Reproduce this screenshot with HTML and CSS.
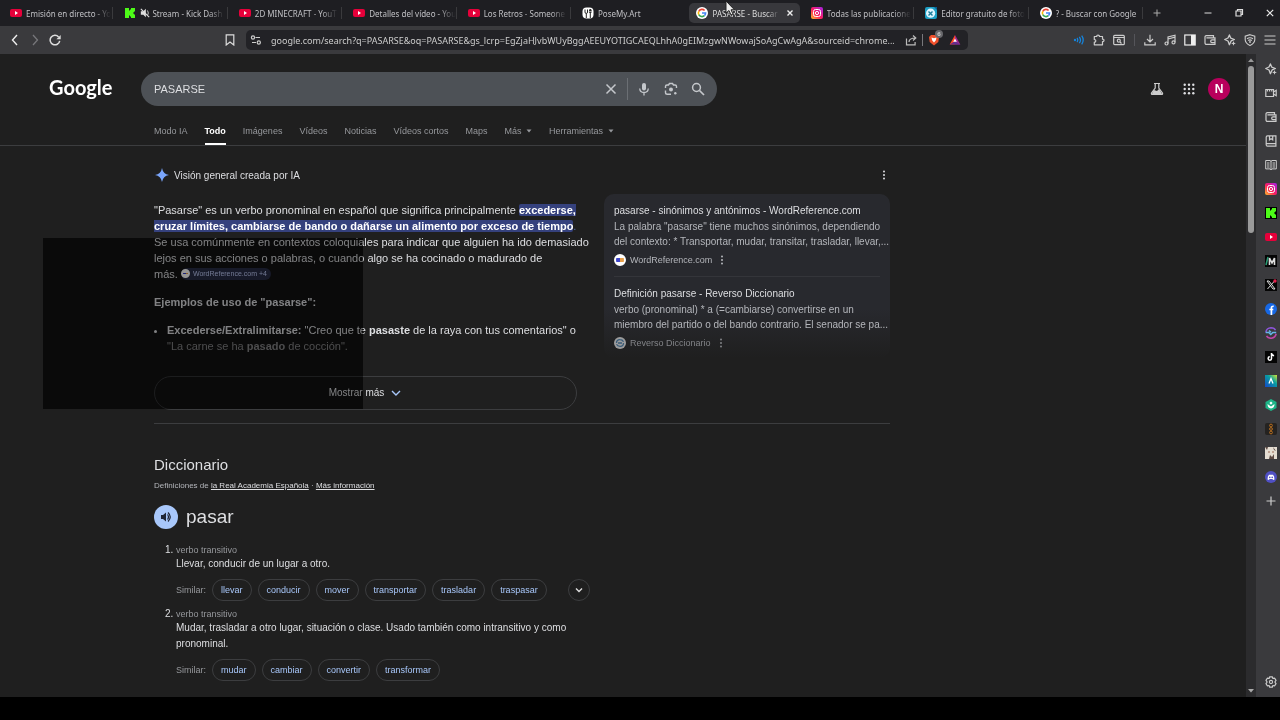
FILE: index.html
```html
<!DOCTYPE html>
<html lang="es">
<head>
  <meta charset="UTF-8">
  <title>PASARSE - Buscar con Google</title>
  <link rel="stylesheet" href="styles.css">
</head>
<body>
  <svg class="sprite" aria-hidden="true">
    <symbol id="youtube" viewBox="0 0 12 12"><rect y="2" width="12" height="8" rx="2" fill="#e6003a"/><path d="M5 4l3 2-3 2z" fill="#fff"/></symbol>
    <symbol id="kick" viewBox="0 0 12 12"><path d="M1 1h4v2.500h1V2.500h1V1h4v3.500h-1v1H9v1h1v1h1V11H7V9.500H6v-1H5V11H1z" fill="#4dfa18"/></symbol>
    <symbol id="google" viewBox="0 0 12 12"><circle cx="6" cy="6" r="6" fill="#fff"/><g fill="none" stroke-width="1.600"><path d="M8.600 3.500A3.600 3.600 0 0 0 2.800 4.300" stroke="#ea4335"/><path d="M2.800 4.300a3.600 3.600 0 0 0 0 3.400" stroke="#fbbc05"/><path d="M2.800 7.700a3.600 3.600 0 0 0 5.600 1" stroke="#34a853"/><path d="M8.400 8.700A3.600 3.600 0 0 0 9.600 6H6" stroke="#4285f4"/></g></symbol>
    <symbol id="instagram" viewBox="0 0 12 12"><rect width="12" height="12" rx="2" fill="url(#insta)"/><g fill="none" stroke="#fff"><rect x="2.500" y="2.500" width="7" height="7" rx="2"/><circle cx="6" cy="6" r="1.600"/></g></symbol>
    <symbol id="dots" viewBox="0 0 12 12"><circle cx="6" cy="2.500" r="1"/><circle cx="6" cy="6" r="1"/><circle cx="6" cy="9.500" r="1"/></symbol>
    <symbol id="wallet" viewBox="0 0 12 12"><g fill="none" stroke="currentColor" stroke-width="1.200"><path d="M9.500 3.500V1.600H2.400A1.400 1.400 0 0 0 1 3v6a1.400 1.400 0 0 0 1.400 1.400H11V3.800H2.400"/><path d="M11 5.900H8a1.300 1.300 0 0 0 0 2.700h3"/></g></symbol>
    <symbol id="leo" viewBox="0 0 12 12"><path d="M5.400.9l1.300 3.200 3.700 1.400-3.200 1.400-1.800 3.800L4 7 .7 5.500 4 4z" fill="none" stroke="currentColor" stroke-width="1.300" stroke-linejoin="round"/><path d="M9.500 7l.7 1.700 1.700.7-1.700.7-.7 1.700-.7-1.700-1.700-.7 1.700-.7z" fill="currentColor"/></symbol>
    <symbol id="arrow" viewBox="0 0 6 4"><path d="M.5.5h5L3 3.500z" fill="currentColor"/></symbol>
    <linearGradient id="insta" x1="0" y1="1" x2="1" y2="0"><stop stop-color="#ffc229"/><stop offset=".45" stop-color="#fb1d5e"/><stop offset="1" stop-color="#a321ed"/></linearGradient>
  </svg>

  <div class="browser">
    <header class="tabs">
      <nav class="tab-list">
        <a class="tab" href="#"><svg><use href="#youtube"/></svg><span>Emisión en directo - Yo</span></a>
        <a class="tab" href="#"><svg><use href="#kick"/></svg><svg class="muted" viewBox="0 0 12 12"><path d="M1 4h3l3-3v10L4 8H1z" fill="#ddd"/><path d="M1 1l10 10" stroke="#ddd" stroke-width="1.300"/><path d="M9 3q2 3 0 6" fill="none" stroke="#ddd"/></svg><span>Stream - Kick Dash</span></a>
        <a class="tab" href="#"><svg><use href="#youtube"/></svg><span>2D MINECRAFT - YouT</span></a>
        <a class="tab" href="#"><svg><use href="#youtube"/></svg><span>Detalles del vídeo - You</span></a>
        <a class="tab" href="#"><svg><use href="#youtube"/></svg><span>Los Retros - Someone</span></a>
        <a class="tab before" href="#"><svg viewBox="0 0 12 12"><rect x=".5" y=".5" width="11" height="11" rx="4" fill="#fff"/><path d="M3 2.500v2.500q0 1.500 1.300 1.500V11M5.500 2.500V5q0 1.500-1.200 1.500M8.300 5v6M6.900 5q1.400 1 2.800 0" stroke="#222" fill="none"/><circle cx="8.300" cy="3.200" r="1.200" fill="#222"/></svg><span>PoseMy.Art</span></a>
        <a class="tab active" href="#"><svg><use href="#google"/></svg><span>PASARSE - Buscar</span><svg class="close" viewBox="0 0 12 12"><path d="M3.500 3.500l5 5M8.500 3.500l-5 5" stroke="#eee" stroke-width="1.400"/></svg></a>
        <a class="tab" href="#"><svg><use href="#instagram"/></svg><span>Todas las publicacione</span></a>
        <a class="tab" href="#"><svg viewBox="0 0 12 12"><rect width="12" height="12" rx="2" fill="#1d9fc4"/><circle cx="5.600" cy="6.200" r="4.600" fill="#dff6ff"/><path d="M3.500 4.500l4 4M7.500 4.500l-4 4" stroke="#1a7f9c" stroke-width="1.400"/><path d="M9 0h3v3z" fill="#0a5d92"/></svg><span>Editor gratuito de foto</span></a>
        <a class="tab" href="#"><svg><use href="#google"/></svg><span>? - Buscar con Google</span></a>
      </nav>
      <button class="new-tab" aria-label="Nueva pestaña"><svg viewBox="0 0 12 12"><path d="M6 2.500v7M2.500 6h7" stroke="#aaa"/></svg></button>
      <div class="window-buttons">
        <button aria-label="Minimizar"><svg viewBox="0 0 12 12"><path d="M2.500 6h7" stroke="#ddd"/></svg></button>
        <button aria-label="Restaurar"><svg viewBox="0 0 12 12"><path d="M3 4h5v5H3zM4.500 4V2.500H9.500v5H8" fill="none" stroke="#ddd" stroke-width="1.200"/></svg></button>
        <button aria-label="Cerrar"><svg viewBox="0 0 12 12"><path d="M2.800 2.800l6.400 6.400M9.200 2.800L2.800 9.200" stroke="#eee" stroke-width="1.200"/></svg></button>
      </div>
    </header>

    <div class="toolbar">
      <div class="history">
        <button aria-label="Atrás"><svg viewBox="0 0 12 12"><path d="M8 1L3.500 6 8 11" fill="none" stroke="#eee" stroke-width="1.400"/></svg></button>
        <button aria-label="Adelante"><svg viewBox="0 0 12 12"><path d="M4 1l4.500 5L4 11" fill="none" stroke="#77777b" stroke-width="1.300"/></svg></button>
        <button aria-label="Recargar"><svg viewBox="0 0 12 12"><path d="M10.700 6.800A4.800 4.800 0 1 1 9.600 2.900" fill="none" stroke="#ddd" stroke-width="1.500"/><path d="M11.700 1v4.300H7.400z" fill="#ddd"/></svg></button>
        <button class="bookmark" aria-label="Marcador"><svg viewBox="0 0 12 12"><path d="M2.200.8h7.600v10.200L6 8l-3.800 3z" fill="none" stroke="#ddd" stroke-width="1.200"/></svg></button>
      </div>
      <div class="address">
        <svg viewBox="0 0 12 12"><g fill="none" stroke="#ccc" stroke-width="1.200"><circle cx="3" cy="3.500" r="1.600"/><path d="M5.500 3.500H10M2 8.500h4"/><circle cx="8.800" cy="8.500" r="1.600"/></g></svg>
        <input type="text" aria-label="Dirección" value="google.com/search?q=PASARSE&amp;oq=PASARSE&amp;gs_lcrp=EgZjaHJvbWUyBggAEEUYOTIGCAEQLhhA0gEIMzgwNWowajSoAgCwAgA&amp;sourceid=chrome...">
        <button aria-label="Compartir"><svg viewBox="0 0 12 12"><path d="M1.500 4.500v6.300h8.600V8M4 8q0-4 6.500-4M8 1.500L10.800 4 8 6.500" fill="none" stroke="#bbb" stroke-width="1.200"/></svg></button>
        <i class="line"></i>
        <button class="shield" aria-label="Escudos"><svg viewBox="0 0 12 12"><path d="M3 1h6l2 2-.7 5L6 11.500 1.700 8 1 3z" fill="#f0502c"/><path d="M3.500 3.500l2.500.8 2.500-.8-.6 2.700L6 8.500 4.100 6.200z" fill="#fff"/></svg><b>6</b></button>
        <button aria-label="BAT"><svg viewBox="0 0 12 12"><path d="M6 1L.7 10.500H6z" fill="#ff4724"/><path d="M6 1l5.300 9.500H6z" fill="#a0278e"/><path d="M.7 10.500h10.600L6 7z" fill="#662d91"/><path d="M6 4.500l1.800 3.300H4.200z" fill="#fff"/></svg></button>
      </div>
      <div class="extensions">
        <button aria-label="Audio"><svg viewBox="0 0 12 12"><g fill="none" stroke="#1684dc" stroke-width="1.300"><path d="M4 4q1.500 2 0 4M6.300 2.800q2.400 3.200 0 6.400M8.700 1.700q3 4.300 0 8.600"/></g><circle cx="2" cy="6" r="1.200" fill="#1684dc"/></svg></button>
        <button aria-label="Extensiones"><svg viewBox="0 0 12 12"><path d="M1.300 2.500h2.500C3.300.6 6.700.6 6.400 2.500H9.500v2.700c2-.5 2 2.700 0 2.300v3.300H1.300V8.200c2 .3 2-3 0-2.600z" fill="none" stroke="#ccc" stroke-width="1.200" stroke-linejoin="round"/></svg></button>
        <button aria-label="Buscar en la página"><svg viewBox="0 0 12 12"><g fill="none" stroke="#ccc" stroke-width="1.200"><rect x=".7" y="1.300" width="10.600" height="9.400" rx="1"/><path d="M.7 3.500h10.600M7 8l1.500 1.500"/><circle cx="5.800" cy="6.700" r="1.500"/></g></svg></button>
        <i class="line"></i>
        <button aria-label="Descargas"><svg viewBox="0 0 12 12"><path d="M6 .8v7M3 5l3 3 3-3M.8 8.200v2.600h10.400V8.200" fill="none" stroke="#ccc" stroke-width="1.200"/></svg></button>
        <button aria-label="Música"><svg viewBox="0 0 12 12"><g fill="none" stroke="#ccc" stroke-width="1.200"><path d="M4 9.500V3l7-1.800v7M4 5l7-1.800"/><circle cx="2.500" cy="9.500" r="1.500"/><circle cx="9.500" cy="8.400" r="1.500"/></g></svg></button>
        <button aria-label="Panel lateral"><svg viewBox="0 0 12 12"><rect x=".8" y="1" width="10.400" height="10" fill="none" stroke="#eee" stroke-width="1.200"/><path d="M7 1h4v10H7z" fill="#eee"/></svg></button>
        <button aria-label="Cartera"><svg><use href="#wallet"/></svg></button>
        <button aria-label="Leo"><svg><use href="#leo"/></svg></button>
        <button aria-label="VPN"><svg viewBox="0 0 12 12"><g fill="none" stroke="#ccc" stroke-width="1.100"><path d="M6 .7l4.800 1.500v3.600Q10.500 9.500 6 11.400 1.500 9.500 1.200 5.800V2.200z"/><path d="M3 4.800q3-2.200 6 0M4.200 6.500q1.800-1.300 3.600 0"/></g><circle cx="6" cy="8" r=".9" fill="#ccc"/></svg></button>
        <button aria-label="Menú"><svg viewBox="0 0 12 12"><path d="M.5 2h11M.5 6h11M.5 10h11" stroke="#ccc" stroke-width="1.200"/></svg></button>
      </div>
    </div>

    <div class="window">
      <div class="page">
        <div class="search-header">
          <a class="logo" href="#">Google</a>
          <form class="search-box">
            <input type="text" aria-label="Buscar" value="PASARSE">
            <button type="button" aria-label="Borrar"><svg viewBox="0 0 14 14"><path d="M2.500 2.500l9 9M11.500 2.500l-9 9" stroke="#c4c7cb" stroke-width="1.500"/></svg></button>
            <i class="line"></i>
            <button type="button" aria-label="Buscar por voz"><svg viewBox="0 0 14 14"><rect x="5" y="1" width="4" height="7.500" rx="2" fill="#c4c7cb"/><path d="M2.700 6.500q.3 4 4.300 4t4.300-4M7 10.500v3" fill="none" stroke="#c4c7cb" stroke-width="1.300"/></svg></button>
            <button type="button" aria-label="Buscar por imagen"><svg viewBox="0 0 14 14"><path d="M1.500 6V4.500q0-1.500 1.500-1.500h1.500L5.500 1.500h3L9.500 3H11q1.500 0 1.500 1.500V6M1.500 8.500v2q0 1.800 1.800 1.800H7" fill="none" stroke="#c4c7cb" stroke-width="1.400"/><circle cx="7" cy="7.400" r="2" fill="#c4c7cb"/><circle cx="11.300" cy="11.300" r="1.200" fill="#c4c7cb"/></svg></button>
            <button type="button" aria-label="Buscar"><svg viewBox="0 0 14 14"><circle cx="5.500" cy="5.500" r="3.900" fill="none" stroke="#c4c7cb" stroke-width="1.500"/><path d="M8.500 8.500l4.500 4.500" stroke="#c4c7cb" stroke-width="1.700"/></svg></button>
          </form>
          <div class="account">
            <button aria-label="Labs"><svg viewBox="0 0 14 14"><path d="M4 1.500h6M5.200 2v4L1.500 11q-.5 1.500 1 1.500h9q1.500 0 1-1.500L8.800 6V2" fill="none" stroke="#ccc" stroke-width="1.200"/><path d="M4 8l3 1 2-2 3 4.500-1 1H2.500L2 11z" fill="#ccc"/></svg></button>
            <button aria-label="Aplicaciones"><svg viewBox="0 0 14 14" fill="#ccc"><circle cx="2.700" cy="2.700" r="1.200"/><circle cx="7" cy="2.700" r="1.200"/><circle cx="11.300" cy="2.700" r="1.200"/><circle cx="2.700" cy="7" r="1.200"/><circle cx="7" cy="7" r="1.200"/><circle cx="11.300" cy="7" r="1.200"/><circle cx="2.700" cy="11.300" r="1.200"/><circle cx="7" cy="11.300" r="1.200"/><circle cx="11.300" cy="11.300" r="1.200"/></svg></button>
            <button class="avatar">N</button>
          </div>
        </div>

        <nav class="filters">
          <a href="#">Modo IA</a>
          <a class="current" href="#">Todo</a>
          <a href="#">Imágenes</a>
          <a href="#">Vídeos</a>
          <a href="#">Noticias</a>
          <a href="#">Vídeos cortos</a>
          <a href="#">Maps</a>
          <a href="#">Más <svg><use href="#arrow"/></svg></a>
          <a href="#">Herramientas <svg><use href="#arrow"/></svg></a>
        </nav>

        <main class="results">
          <section class="overview">
            <div class="overview-title">
              <svg viewBox="0 0 14 14"><path d="M7 0q1 6 7 7-6 1-7 7-1-6-7-7 6-1 7-7z" fill="#7aa5fb"/></svg>
              <h2>Visión general creada por IA</h2>
              <button aria-label="Más opciones"><svg><use href="#dots"/></svg></button>
            </div>
            <div class="overview-body">
              <div class="answer">
                <p>"Pasarse" es un verbo pronominal en español que significa principalmente <mark>excederse,<br>cruzar límites, cambiarse de bando o dañarse un alimento por exceso de tiempo</mark><span class="period">.</span><br>Se usa comúnmente en contextos coloquiales para indicar que alguien ha ido demasiado<br>lejos en sus acciones o palabras, o cuando algo se ha cocinado o madurado de<br>más. <a class="cite" href="#"><i class="wr"></i>WordReference.com +4</a></p>
                <h3>Ejemplos de uso de "pasarse":</h3>
                <ul>
                  <li><b>Excederse/Extralimitarse:</b> "Creo que te <b>pasaste</b> de la raya con tus comentarios" o<br><span class="faded">"La carne se ha <b>pasado</b> de cocción".</span></li>
                </ul>
                <button class="show-more">Mostrar más <svg viewBox="0 0 12 12"><path d="M2 4l4 4 4-4" fill="none" stroke="#a8c7fa" stroke-width="1.400"/></svg></button>
              </div>
              <aside class="sources">
                <article>
                  <h4>pasarse - sinónimos y antónimos - WordReference.com</h4>
                  <p>La palabra "pasarse" tiene muchos sinónimos, dependiendo<br>del contexto: * Transportar, mudar, transitar, trasladar, llevar,...</p>
                  <footer><i class="wr"></i><span>WordReference.com</span><svg><use href="#dots"/></svg></footer>
                </article>
                <article>
                  <h4>Definición pasarse - Reverso Diccionario</h4>
                  <p>verbo (pronominal) * a (=cambiarse) convertirse en un<br>miembro del partido o del bando contrario. El senador se pa...</p>
                  <footer class="dim"><svg viewBox="0 0 12 12"><circle cx="6" cy="6" r="6" fill="#ddd"/><path d="M2.500 6q0-3.500 3.500-3.300 2.500 0 3.500 2M9.500 6q0 3.500-3.500 3.300-2.500 0-3.500-2M4 6h4" fill="none" stroke="#467ba5" stroke-width="1.300"/></svg><span>Reverso Diccionario</span><svg><use href="#dots"/></svg></footer>
                </article>
              </aside>
            </div>
          </section>

          <section class="dictionary">
            <h2>Diccionario</h2>
            <p class="credit">Definiciones de <a href="#">la Real Academia Española</a> · <a href="#">Más información</a></p>
            <div class="word">
              <button aria-label="Escuchar"><svg viewBox="0 0 14 14"><path d="M2 5h2l3-2.500v9L4 9H2z" fill="#202635"/><path d="M8.500 4.500q2 2.500 0 5M9 2.500q4.500 4.500 0 9" fill="none" stroke="#202635" stroke-width="1.200"/></svg></button>
              <h3>pasar</h3>
            </div>
            <ol>
              <li>
                <span class="kind">verbo transitivo</span>
                <p>Llevar, conducir de un lugar a otro.</p>
                <div class="similar">
                  <span>Similar:</span>
                  <button>llevar</button><button>conducir</button><button>mover</button><button>transportar</button><button>trasladar</button><button>traspasar</button>
                  <button class="expand" aria-label="Ver más"><svg viewBox="0 0 12 12"><path d="M3 4.500l3 3 3-3" fill="none" stroke="#ddd" stroke-width="1.400"/></svg></button>
                </div>
              </li>
              <li>
                <span class="kind">verbo transitivo</span>
                <p>Mudar, trasladar a otro lugar, situación o clase. Usado también como intransitivo y como<br>pronominal.</p>
                <div class="similar">
                  <span>Similar:</span>
                  <button>mudar</button><button>cambiar</button><button>convertir</button><button>transformar</button>
                </div>
              </li>
            </ol>
          </section>
        </main>
        <div class="shade"></div>
      </div>

      <div class="scrollbar">
        <svg viewBox="0 0 6 4"><path d="M0 4h6L3 .5z" fill="#999"/></svg>
        <div class="track"><div class="thumb"></div></div>
        <svg viewBox="0 0 6 4"><path d="M0 0h6L3 3.500z" fill="#aaa"/></svg>
      </div>

      <nav class="sidebar">
        <a href="#" aria-label="Leo"><svg><use href="#leo"/></svg></a>
        <a href="#" aria-label="Talk"><svg viewBox="0 0 12 12"><path d="M.8 2.500h7.700v7H.8zM8.500 5l2.700-1.700v5.400L8.500 7M2.500 4.500V3M4.600 4.500V3M6.700 4.500V3" fill="none" stroke="currentColor" stroke-width="1.200"/></svg></a>
        <a href="#" aria-label="Cartera"><svg><use href="#wallet"/></svg></a>
        <a href="#" aria-label="Marcadores"><svg viewBox="0 0 12 12"><path d="M2.500.8h8.400v10.400H2.500Q1.200 11.200 1.200 9.800V2.200Q1.200.8 2.500.8zM1.500 8.600h9.400M4.500.8v4l1.600-1 1.600 1v-4" fill="none" stroke="currentColor" stroke-width="1.200"/></svg></a>
        <a href="#" aria-label="Lista de lectura"><svg viewBox="0 0 12 12"><path d="M.7 1.500H5L6 2.300l1-.8h4.300v8.400H7l-1 1-1-1H.7zM6 2v9M2 4h2.500M2 6h2.500M2 8h2.500M7.500 4H10M7.500 6H10M7.500 8H10" fill="none" stroke="currentColor"/></svg></a>
        <a href="#" aria-label="Instagram"><svg><use href="#instagram"/></svg></a>
        <a href="#" aria-label="Kick"><svg class="on-black"><use href="#kick"/></svg></a>
        <a href="#" aria-label="YouTube"><svg><use href="#youtube"/></svg></a>
        <a href="#" aria-label="M"><svg viewBox="0 0 12 12"><rect width="12" height="12" fill="#050505"/><path d="M1 10L3 2" stroke="#2b9b75" stroke-width="1.600"/><path d="M4.500 10V3L7 8l2.500-5v7" fill="none" stroke="#ddd" stroke-width="1.600"/></svg></a>
        <a href="#" aria-label="X"><svg viewBox="0 0 12 12"><rect width="12" height="12" fill="#050505"/><path d="M2 2h2l6 8H8zM9.500 2l-7 8" fill="none" stroke="#ddd"/><circle cx="10" cy="2" r="1.700" fill="#e3204b"/></svg></a>
        <a href="#" aria-label="Facebook"><svg viewBox="0 0 12 12"><circle cx="6" cy="6" r="6" fill="#1768e5"/><path d="M6.400 12V5q0-2 2.300-1.700M4.300 6.500h4" fill="none" stroke="#fff" stroke-width="1.700"/></svg></a>
        <a href="#" aria-label="Shazam"><svg viewBox="0 0 12 12"><g fill="none" stroke-width="1.500"><path d="M.8 5.500Q1.500 1 6 .8q3.500.2 4.500 2.500" stroke="#8c55d8"/><path d="M1.500 9q1.500 2.300 4.700 2.300 4-.5 5-4.500" stroke="#c146a8"/><path d="M.8 5.500h3l2 2 2-2h3.400M4 3.500l2 1.700" stroke="#65b6ea"/></g></svg></a>
        <a href="#" aria-label="TikTok"><svg viewBox="0 0 12 12"><rect width="12" height="12" fill="#050505"/><path d="M6.500 2v5.500a1.700 1.700 0 1 1-1.700-1.700M6.500 2.500q.4 2 2.600 2.200" fill="none" stroke="#fff" stroke-width="1.500"/></svg></a>
        <a href="#" aria-label="Alight"><svg viewBox="0 0 12 12"><rect width="12" height="12" fill="url(#alight)"/><path d="M4 8.500L6 3.500l2 5" fill="none" stroke="#fff" stroke-width="1.300"/><linearGradient id="alight" x1="0" y1="1" x2="1" y2="0"><stop stop-color="#1546cb"/><stop offset=".6" stop-color="#08a0a0"/><stop offset="1" stop-color="#d6e332"/></linearGradient></svg></a>
        <a href="#" aria-label="Filmora"><svg viewBox="0 0 12 12"><path d="M6 0l5.500 3v6L6 12 .5 9V3z" fill="#1db487"/><path d="M6 7.500L2.500 5q0 4 3.500 4.500Q9.500 9 9.500 5zM6 2.500l1.600 1.600L6 5.700 4.400 4.100z" fill="#fff"/></svg></a>
        <a href="#" aria-label="Cadena"><svg viewBox="0 0 12 12"><rect width="12" height="12" rx="2" fill="#252321"/><g fill="none" stroke="#b56d1e"><circle cx="6" cy="2.500" r="1.400"/><circle cx="6" cy="6" r="1.400"/><circle cx="6" cy="9.500" r="1.400"/></g></svg></a>
        <a href="#" aria-label="Manga"><svg viewBox="0 0 12 12"><rect width="12" height="12" fill="#e4ddd2"/><path d="M0 0h3L2 3zM4 12l1-4 2 2 2-3v5zM8 0l3 4-2-1z" fill="#5c4a44"/><path d="M3 5h2M7 5h2" stroke="#9a6a55"/></svg></a>
        <a href="#" aria-label="Discord"><svg viewBox="0 0 12 12"><circle cx="6" cy="6" r="6" fill="#5050c4"/><path d="M2.500 8.500Q2.500 5 4 3.700h4Q9.500 5 9.500 8.500L8 9 7.500 8h-3L4 9z" fill="#fff"/><circle cx="4.800" cy="6.400" r=".8" fill="#5050c4"/><circle cx="7.200" cy="6.400" r=".8" fill="#5050c4"/></svg></a>
        <a href="#" aria-label="Añadir"><svg viewBox="0 0 12 12"><path d="M6 1.500v9M1.500 6h9" stroke="currentColor" stroke-width="1.200"/></svg></a>
        <a class="settings" href="#" aria-label="Ajustes"><svg viewBox="0 0 12 12"><path d="M4.700.8h2.600l.6 1.700 1.800-.3L11 4.400 9.900 6 11 7.600 9.700 9.800l-1.800-.3-.6 1.700H4.700l-.6-1.700-1.800.3L1 7.600 2.100 6 1 4.400l1.300-2.200 1.800.3z" fill="none" stroke="currentColor" stroke-width="1.200" stroke-linejoin="round"/><circle cx="6" cy="6" r="1.600" fill="none" stroke="currentColor" stroke-width="1.100"/></svg></a>
      </nav>
    </div>
  </div>
  <svg class="cursor" viewBox="0 0 10 16"><path d="M1 1v12l3-2.500L6 15l2-1-2-4.200h3.500z" fill="#eee" stroke="#222"/></svg>
</body>
</html>
```
FILE: styles.css
```css
* {
  box-sizing: border-box;
}

body {
  margin: 0;
  background: #000;
  color: #dedfe2;
  font-family: "Liberation Sans", Arial, sans-serif;
  font-size: 10px;
}

h2, h3, h4, p, ul, ol {
  margin: 0;
  padding: 0;
}

a {
  color: inherit;
  text-decoration: none;
}

button {
  display: flex;
  align-items: center;
  justify-content: center;
  padding: 0;
  border: 0;
  background: none;
  color: inherit;
  font: inherit;
}

input {
  flex: 1;
  min-width: 0;
  padding: 0;
  border: 0;
  outline: 0;
  background: none;
  color: inherit;
  font: inherit;
}

svg {
  flex: none;
  width: 12px;
  height: 12px;
  fill: currentColor;
}

.sprite {
  position: absolute;
  width: 0;
  height: 0;
}

.browser {
  display: flex;
  flex-direction: column;
  height: calc(100vh - 23px);
  overflow: hidden;
  background: #1e1e22;
}

/* tabs */
.tabs {
  display: flex;
  align-items: center;
  height: 26px;
  padding-left: 3px;
  font-family: "Noto Sans", sans-serif;
  font-size: 8px;
  color: #c0c0c4;
}

.tab-list {
  display: flex;
  flex: 1;
  gap: 4px;
  min-width: 0;
  margin-right: 4px;
}

.tab {
  display: flex;
  flex: 1;
  align-items: center;
  gap: 4px;
  min-width: 0;
  height: 20px;
  padding: 0 4px 0 7px;
  background: linear-gradient(#3a3a3d, #3a3a3d) right / 1px 12px no-repeat;
}

.tab span {
  flex: 1;
  white-space: nowrap;
  mask-image: linear-gradient(to right, #000 80%, transparent);
}

.tab:last-child span,
.tab.before span {
  mask-image: none;
}

.tab .muted {
  width: 10px;
  margin-right: -2px;
}

.tab.before {
  background: none;
}

.tab.active {
  border-radius: 5px;
  background: #38383c;
  color: #ddd;
}

.new-tab {
  width: 20px;
  height: 20px;
}

.window-buttons {
  display: flex;
  gap: 11px;
  padding-left: 31px;
}

.window-buttons button {
  width: 20px;
}

/* toolbar */
.toolbar {
  display: grid;
  grid-template-columns: minmax(0, 246fr) minmax(0, 722fr) minmax(0, 312fr);
  align-items: center;
  height: 28px;
  background: #3a3a3d;
  color: #ccc;
}

.history {
  display: flex;
  padding: 0 6px 0 5px;
}

.history button,
.extensions button {
  width: 20px;
  height: 20px;
}

.history .bookmark {
  margin-left: auto;
}

.address {
  display: flex;
  align-items: center;
  gap: 9px;
  height: 20px;
  padding: 0 7px 0 4px;
  border-radius: 5px;
  background: #222226;
  font-family: "Noto Sans", sans-serif;
  font-size: 9px;
}

.line {
  width: 1px;
  height: 12px;
  background: #77777b;
}

.address .line {
  margin: 0 -4px;
}

.shield {
  position: relative;
}

.shield b {
  position: absolute;
  top: -4px;
  left: 7px;
  width: 8px;
  border-radius: 4px;
  background: #68686c;
  font-size: 6px;
  line-height: 8px;
}

.extensions {
  display: flex;
  align-items: center;
  justify-content: flex-end;
}

.extensions .line {
  margin: 0 5px;
  background: #55555a;
}

/* page */
.window {
  display: flex;
  flex: 1;
  min-height: 0;
}

.page {
  position: relative;
  flex: 1;
  min-width: 0;
  background: #1f1f1f;
}

.search-header {
  display: flex;
  align-items: center;
  padding: 18px 16px 0 49px;
}

.logo {
  width: 92px;
  padding-bottom: 4px;
  color: #fff;
  font-family: Lato, sans-serif;
  font-size: 20px;
  font-weight: bold;
}

.search-box {
  display: flex;
  flex: 0 1 576px;
  align-items: center;
  height: 34px;
  padding: 0 6px 0 13px;
  border-radius: 17px;
  background: #4d5156;
  font-size: 11px;
}

.search-box button {
  width: 27px;
}

.search-box svg,
.account svg,
.word svg {
  width: 14px;
  height: 14px;
}

.search-box .line {
  height: 22px;
  margin: 0 2px 0 3px;
  background: #6b6f74;
}

.account {
  display: flex;
  align-items: center;
  gap: 12px;
  margin-left: auto;
}

.account button {
  width: 20px;
}

.account .avatar {
  width: 22px;
  height: 22px;
  margin-left: -3px;
  border-radius: 50%;
  background: #b8005c;
  color: #fff;
  font-size: 12px;
  font-weight: bold;
}

.filters {
  display: flex;
  gap: 17px;
  height: 40px;
  padding: 12px 0 0 154px;
  border-bottom: 1px solid #3c3d3f;
  color: #96989c;
  font-size: 9px;
  line-height: 26px;
}

.filters .current {
  border-bottom: 2px solid #fff;
  color: #fff;
  font-weight: bold;
}

.filters svg {
  width: 6px;
  height: 4px;
  margin: 0 0 1px 2px;
}

.results {
  max-width: 890px;
  padding-left: 154px;
}

.overview {
  padding-bottom: 13px;
  border-bottom: 1px solid #3c3d3f;
}

.overview-title {
  display: flex;
  align-items: center;
  gap: 5px;
  height: 48px;
  padding: 10px 0 0 1px;
}

.overview-title svg {
  width: 14px;
  height: 14px;
}

.overview-title h2 {
  font-size: 10px;
  font-weight: normal;
}

.overview-title button {
  margin-left: auto;
}

.overview-title button svg {
  width: 12px;
  height: 12px;
}

.overview-body {
  display: grid;
  grid-template-columns: minmax(0, 423fr) minmax(0, 286fr);
  align-items: start;
  gap: 27px;
}

.answer {
  padding-top: 8px;
  font-size: 11px;
  line-height: 16px;
  white-space: nowrap;
}

.answer mark {
  border-radius: 2px;
  background: #35417d;
  color: #fff;
  font-weight: bold;
}

.period {
  color: #5368a8;
}

.cite {
  display: inline-flex;
  align-items: center;
  gap: 3px;
  height: 12px;
  padding-right: 4px;
  border-radius: 6px;
  background: #343850;
  color: #c4d0fa;
  font-size: 7px;
}

.wr {
  width: 12px;
  height: 12px;
  border: 2px solid #fff;
  border-radius: 50%;
  background: linear-gradient(#fff 30%, transparent 30% 70%, #fff 70%), linear-gradient(to right, #3e45c9 50%, #e9a04b 50%);
}

.cite .wr {
  width: 9px;
  height: 9px;
}

.answer h3 {
  margin: 12px 0;
  font-size: 11px;
}

.answer li {
  margin-left: 13px;
}

.faded {
  color: #8a8a8c;
}

.show-more {
  width: 100%;
  height: 34px;
  margin-top: 22px;
  gap: 6px;
  border: 1px solid #3c3d3f;
  border-radius: 17px;
  font-size: 10px;
}

.sources {
  height: 164px;
  padding: 0 10px;
  border-radius: 10px;
  background: linear-gradient(#28292e 70%, #1f1f1f);
  white-space: nowrap;
}

.sources article {
  height: 83px;
  padding-top: 9px;
  border-bottom: 1px solid #34353a;
}

.sources article:last-child {
  border: 0;
}

.sources h4 {
  font-size: 10px;
  font-weight: normal;
  line-height: 16px;
}

.sources p {
  color: #b4b6bb;
  font-size: 10px;
  line-height: 15px;
}

.sources footer {
  display: flex;
  align-items: center;
  gap: 4px;
  padding-top: 5px;
  color: #b4b6bb;
  font-size: 9px;
  line-height: 12px;
}

.sources .dim {
  opacity: 0.65;
}

/* dictionary */
.dictionary h2 {
  padding-top: 32px;
  font-size: 15px;
  font-weight: normal;
  line-height: 18px;
}

.credit {
  margin-top: 6px;
  color: #b4b6bb;
  font-size: 8px;
  line-height: 12px;
}

.credit a {
  color: #dedfe2;
  text-decoration: underline;
}

.word {
  display: flex;
  align-items: center;
  gap: 8px;
  margin-top: 13px;
}

.word button {
  width: 24px;
  height: 24px;
  border-radius: 50%;
  background: #a8c7fa;
}

.word h3 {
  font-size: 19px;
  font-weight: normal;
  line-height: 24px;
}

.dictionary ol {
  padding: 13px 0 0 22px;
  font-size: 10px;
  line-height: 16px;
}

.dictionary li {
  margin-bottom: 5px;
}

.kind {
  display: block;
  color: #96989c;
  font-size: 9px;
  line-height: 12px;
}

.similar {
  display: flex;
  align-items: center;
  gap: 6px;
  margin-top: 7px;
  color: #96989c;
  font-size: 9px;
}

.similar button {
  height: 22px;
  padding: 0 8px;
  border: 1px solid #3c3d3f;
  border-radius: 11px;
  color: #a8c7fa;
}

.similar .expand {
  width: 22px;
  margin-left: 15px;
  padding: 0;
}

/* translucent panel over the left part of the answer */
.shade {
  position: absolute;
  top: 184px;
  left: 43px;
  width: 320px;
  height: 171px;
  backdrop-filter: brightness(0.58) contrast(1.07);
}

/* scrollbar and sidebar */
.scrollbar {
  display: flex;
  flex-direction: column;
  align-items: center;
  gap: 4px;
  width: 10px;
  padding: 4px 0;
  background: #2b2b2d;
}

.scrollbar svg {
  width: 6px;
  height: 4px;
}

.track {
  flex: 1;
}

.thumb {
  width: 6px;
  height: 27%;
  border-radius: 3px;
  background: #9a9a9a;
}

.sidebar {
  display: flex;
  flex-direction: column;
  gap: 12px;
  width: 24px;
  padding: 9px 3px 9px 9px;
  background: #3a3a3d;
  color: #ccc;
}

.sidebar a {
  display: flex;
}

.on-black {
  background: #000;
}

.settings {
  margin-top: auto;
}

.cursor {
  position: absolute;
  top: 0;
  left: 725px;
  width: 10px;
  height: 16px;
}
```
